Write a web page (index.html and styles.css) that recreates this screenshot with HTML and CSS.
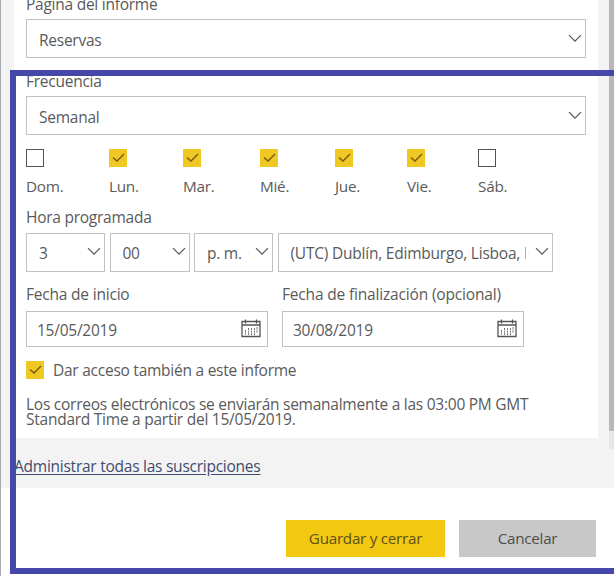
FILE: index.html
```
<!DOCTYPE html>
<html lang="es">
<head>
<meta charset="utf-8">
<title>Suscripciones</title>
<link rel="stylesheet" href="styles.css">
</head>
<body>
<svg class="defs" width="0" height="0">
  <symbol id="chevron" viewBox="0 0 14 9"><path d="M1 1.2 L7 7.2 L13 1.2" fill="none" stroke="#555" stroke-width="1.2"/></symbol>
  <symbol id="check" viewBox="0 0 18 18"><path d="M4 8.5 L8 12 L15 5" fill="none" stroke="#75580f" stroke-width="1.4"/></symbol>
  <symbol id="calendar" viewBox="0 0 20 19">
    <path d="M1 2.5H19V17.5H1ZM1 6H19M4.5 .5V4.5M15.5 .5V4.5" fill="none" stroke="#555" stroke-width="1.3"/>
    <path d="M4.5 11V16M7.5 9V16M10.5 9V16M13.5 9V16M16 8V14" fill="none" stroke="#777" stroke-width="1" stroke-dasharray="2 .6"/>
  </symbol>
</svg>
<div class="dialog">
  <div class="body">
    <form class="form">
      <div class="label page-label">Página del informe</div>
      <div class="select page"><span>Reservas</span><svg class="chev"><use href="#chevron"/></svg></div>
      <div class="label freq-label">Frecuencia</div>
      <div class="select freq"><span>Semanal</span><svg class="chev"><use href="#chevron"/></svg></div>
      <div class="days">
        <div class="day"><i class="box"></i><span>Dom.</span></div>
        <div class="day"><i class="box on"><svg><use href="#check"/></svg></i><span>Lun.</span></div>
        <div class="day"><i class="box on"><svg><use href="#check"/></svg></i><span>Mar.</span></div>
        <div class="day"><i class="box on"><svg><use href="#check"/></svg></i><span>Mié.</span></div>
        <div class="day"><i class="box on"><svg><use href="#check"/></svg></i><span>Jue.</span></div>
        <div class="day"><i class="box on"><svg><use href="#check"/></svg></i><span>Vie.</span></div>
        <div class="day"><i class="box"></i><span>Sáb.</span></div>
      </div>
      <div class="label time-label">Hora programada</div>
      <div class="times">
        <div class="select"><span>3</span><svg class="chev"><use href="#chevron"/></svg></div>
        <div class="select"><span>00</span><svg class="chev"><use href="#chevron"/></svg></div>
        <div class="select"><span>p. m.</span><svg class="chev"><use href="#chevron"/></svg></div>
        <div class="select zone"><span>(UTC) Dublín, Edimburgo, Lisboa, Londres</span><svg class="chev"><use href="#chevron"/></svg></div>
      </div>
      <div class="dates">
        <div><div class="label start-label">Fecha de inicio</div><div class="date"><span>15/05/2019</span><svg class="cal"><use href="#calendar"/></svg></div></div>
        <div><div class="label end-label">Fecha de finalización (opcional)</div><div class="date"><span>30/08/2019</span><svg class="cal"><use href="#calendar"/></svg></div></div>
      </div>
      <div class="access"><i class="box on"><svg><use href="#check"/></svg></i><span>Dar acceso también a este informe</span></div>
      <p class="note">Los correos electrónicos se enviarán semanalmente a las 03:00 PM GMT<br>Standard Time a partir del 15/05/2019.</p>
    </form>
    <div class="track"><div class="thumb"></div><div class="arrow"></div></div>
  </div>
  <div class="manage"><a href="#">Administrar todas las suscripciones</a></div>
  <div class="actions"><button class="save">Guardar y cerrar</button><button class="cancel">Cancelar</button></div>
</div>
<div class="highlight"></div>
</body>
</html>
```
FILE: styles.css
```
* { box-sizing: border-box; }
body { margin: 0; width: 614px; height: 576px; overflow: hidden; position: relative; background: #fff;
  font: 15.5px/20px "Open Sans", "Noto Sans", sans-serif; letter-spacing: -.25px; color: #5a5a5a; }
.defs { position: absolute; }
.dialog { height: 576px; border-left: 1px solid #a9a9b2; }
.body { display: flex; height: 438px; background: #f3f3f4; padding-left: 13px; }
.form { width: 584px; height: 438px; background: #fff; padding: 0 12px; overflow: hidden; }
.label { height: 20px; white-space: nowrap; }
.page-label { margin-top: -6px; }
.select { display: flex; align-items: center; height: 39px; border: 1px solid #c2c2c2; padding: 2px 3px 0 12px; background: #fff; }
.select span { flex: 1; min-width: 0; overflow: hidden; white-space: nowrap; }
.chev { width: 14px; height: 9px; flex: none; margin-top: -3px; }
.page { margin-top: 5px; width: 560px; }
.freq-label { margin-top: 13px; }
.freq { margin-top: 5px; width: 560px; }
.days { display: grid; grid-template-columns: 83px 74px 77px 75px 72px 71px 50px; margin-top: 14px; height: 48px; font-size: 15.3px; }
.day span { display: block; margin-top: 9px; }
.box { display: block; width: 18px; height: 18px; border: 1px solid #555; background: #fff; flex: none; }
.box.on { border: 0; background: #f0c823; }
.box svg { display: block; width: 18px; height: 18px; }
.time-label { margin-top: 10px; }
.times { display: grid; grid-template-columns: 79px 80px 79px 275px; gap: 4.5px; margin-top: 6px; }
.times .select { padding-top: 1px; }
.zone span { letter-spacing: -.22px; }
.zone .chev { margin-left: 9px; }
.dates { display: grid; grid-template-columns: 242px 242px; gap: 14px; margin-top: 12px; }
.start-label { letter-spacing: -.2px; }
.end-label { letter-spacing: -.17px; }
.date { display: flex; align-items: center; justify-content: space-between; height: 36px; border: 1px solid #c2c2c2; margin-top: 7px; padding: 1px 6px 0 10px; }
.cal { width: 20px; height: 19px; margin-top: -2px; }
.access { display: flex; align-items: center; gap: 9px; margin-top: 13px; height: 20px; }
.note { margin: 17px 0 0; line-height: 15px; white-space: nowrap; }
.track { margin-left: 11px; width: 5px; }
.thumb { height: 431px; background: #b8b8ba; }
.arrow { height: 18px; background: #e6e6ec; }
.manage { height: 50px; background: #f3f3f4; padding: 18px 0 0 13px; }
.manage a { color: #3f4d6d; text-decoration: underline; text-underline-offset: 2px; }
.actions { display: flex; gap: 14px; padding: 32px 0 0 285px; }
.actions button { height: 37px; border: 0; padding: 0 0 2px; font: inherit; font-size: 15.2px; letter-spacing: inherit; }
.save { width: 159px; background: #f2c811; color: #5c501c; }
.cancel { width: 137px; background: #c8c8c8; color: #4e4e4e; }
.highlight { position: absolute; left: 10px; top: 70px; width: 620px; height: 504px; border: 6px solid #4548a8; pointer-events: none; }
```
